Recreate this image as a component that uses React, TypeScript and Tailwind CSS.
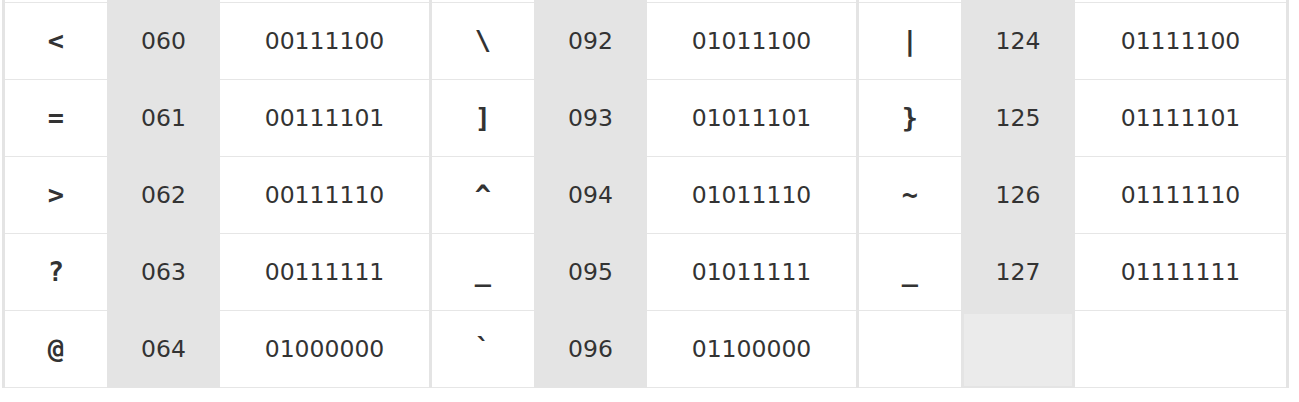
const TABLES: [string, string, string][][] = [
  [
    ['<', '060', '00111100'],
    ['=', '061', '00111101'],
    ['>', '062', '00111110'],
    ['?', '063', '00111111'],
    ['@', '064', '01000000'],
  ],
  [
    ['\\', '092', '01011100'],
    [']', '093', '01011101'],
    ['^', '094', '01011110'],
    ['_', '095', '01011111'],
    ['`', '096', '01100000'],
  ],
  [
    ['|', '124', '01111100'],
    ['}', '125', '01111101'],
    ['~', '126', '01111110'],
    ['_', '127', '01111111'],
    ['', '', ''],
  ],
]

const Divider = () => <div className="h-[388px] w-[3px] shrink-0 bg-[#e4e4e4]" />

function Column({ cells, width, kind }: { cells: string[]; width: string; kind: 'sym' | 'dec' | 'bin' }) {
  const gray = kind === 'dec'
  return (
    <div className={`flex shrink-0 flex-col ${width} ${gray ? 'bg-[#e4e4e4]' : 'bg-white'}`}>
      <div className="h-[2px]" />
      {cells.map((c, i) => {
        const last = i === cells.length - 1
        const empty = c === ''
        return (
          <div
            key={i}
            className={`flex h-[77px] items-center justify-center border-t ${last ? 'h-[78px] border-b' : ''} ${
              gray ? 'border-[#e4e4e4]' : 'border-[#e6e6e6]'
            } ${
              kind === 'sym'
                ? "font-['DejaVu_Sans_Mono',monospace] text-[27px] font-bold"
                : "pt-[2px] font-['DejaVu_Sans',Verdana,sans-serif] text-[23.5px]"
            } text-[#333]`}
          >
            {gray && empty ? (
              <div className="-mt-[2px] h-full w-full border-x-[3px] border-t-2 border-[#e4e4e4] bg-[#ebebeb]" />
            ) : (
              c
            )}
          </div>
        )
      })}
    </div>
  )
}

export default function App() {
  return (
    <div className="h-[402px] w-[1299px] overflow-hidden bg-white">
      <div className="flex pl-[2px]">
        {TABLES.map((rows, t) => (
          <div key={t} className="flex">
            <Divider />
            <Column kind="sym" width="w-[102px]" cells={rows.map((r) => r[0])} />
            <Column kind="dec" width={t === 2 ? 'w-[114px]' : 'w-[113px]'} cells={rows.map((r) => r[1])} />
            <Column kind="bin" width={t === 2 ? 'w-[211px]' : 'w-[209px]'} cells={rows.map((r) => r[2])} />
          </div>
        ))}
        <Divider />
      </div>
    </div>
  )
}
